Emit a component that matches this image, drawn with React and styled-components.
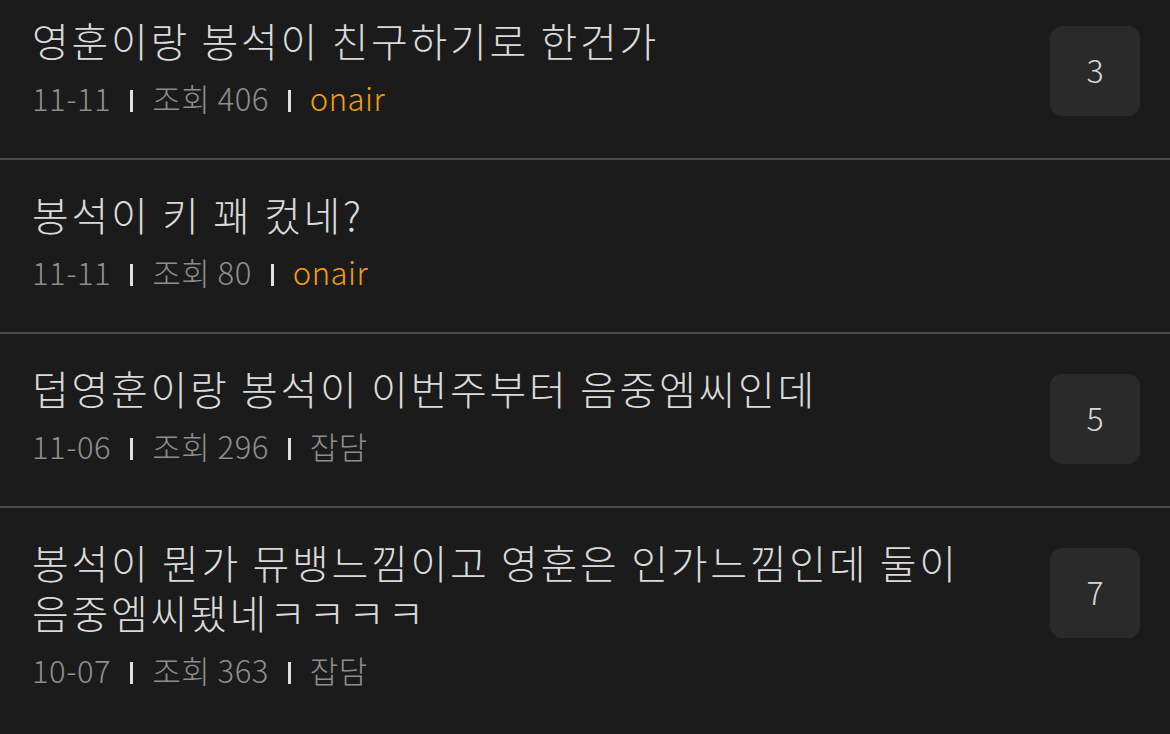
import React from 'react';
import styled, { createGlobalStyle } from 'styled-components';

const GlobalStyle = createGlobalStyle`
  html, body {
    margin: 0;
    padding: 0;
    background: #1b1b1b;
  }
  body {
    font-family: "Noto Sans CJK KR", "Noto Sans", sans-serif;
  }
`;

const posts = [
  { id: 1, title: '영훈이랑 봉석이 친구하기로 한건가', date: '11-11', views: 406, board: 'onair', comments: 3 },
  { id: 2, title: '봉석이 키 꽤 컸네?', date: '11-11', views: 80, board: 'onair' },
  { id: 3, title: '덥영훈이랑 봉석이 이번주부터 음중엠씨인데', date: '11-06', views: 296, board: '잡담', comments: 5 },
  { id: 4, title: '봉석이 뭔가 뮤뱅느낌이고 영훈은 인가느낌인데 둘이 음중엠씨됐네ㅋㅋㅋㅋ', date: '10-07', views: 363, board: '잡담', comments: 7 },
];

function PostRow({ post, first }) {
  return (
    <Row $first={first}>
      <Body>
        <Title>{post.title}</Title>
        <Meta>
          <span>{post.date}</span>
          <Bar />
          <span>조회 {post.views}</span>
          <Bar />
          <Board $hot={post.board === 'onair'}>{post.board}</Board>
        </Meta>
      </Body>
      {post.comments ? <Count>{post.comments}</Count> : null}
    </Row>
  );
}

export default function App() {
  return (
    <>
      <GlobalStyle />
      <List>
        {posts.map((post, i) => (
          <PostRow key={post.id} post={post} first={i === 0} />
        ))}
      </List>
    </>
  );
}

const List = styled.ul`
  list-style: none;
  margin: 0;
  padding: 0;
  width: 1170px;
  height: 734px;
  overflow: hidden;
  background: #1b1b1b;
`;

const Row = styled.li`
  display: flex;
  align-items: flex-start;
  justify-content: space-between;
  padding: ${(p) => (p.$first ? '15px' : '29px')} 30px 41px 32px;
  border-top: ${(p) => (p.$first ? 'none' : '2px solid #4a4a4a')};
`;

const Body = styled.div`
  flex: 1;
  min-width: 0;
  padding-right: 40px;
`;

const Title = styled.div`
  font-size: 40px;
  font-weight: 300;
  letter-spacing: 2.7px;
  line-height: 50px;
  color: #dadada;
  word-break: keep-all;
`;

const Meta = styled.div`
  display: flex;
  align-items: center;
  margin-top: 12px;
  height: 40px;
  font-size: 31px;
  font-weight: 300;
  letter-spacing: 0.5px;
  color: #8e8e8e;
`;

const Bar = styled.i`
  display: inline-block;
  width: 3px;
  height: 22px;
  margin: 8px 19px 0;
  background: #e0e0e0;
`;

const Board = styled.span`
  color: ${(p) => (p.$hot ? '#f39e0d' : '#8e8e8e')};
`;

const Count = styled.div`
  flex: none;
  display: flex;
  align-items: center;
  justify-content: center;
  box-sizing: border-box;
  width: 90px;
  height: 90px;
  margin-top: 11px;
  padding-bottom: 4px;
  border-radius: 12px;
  background: #2a2a2a;
  color: #d8d8d8;
  font-size: 32px;
  font-weight: 300;
`;
